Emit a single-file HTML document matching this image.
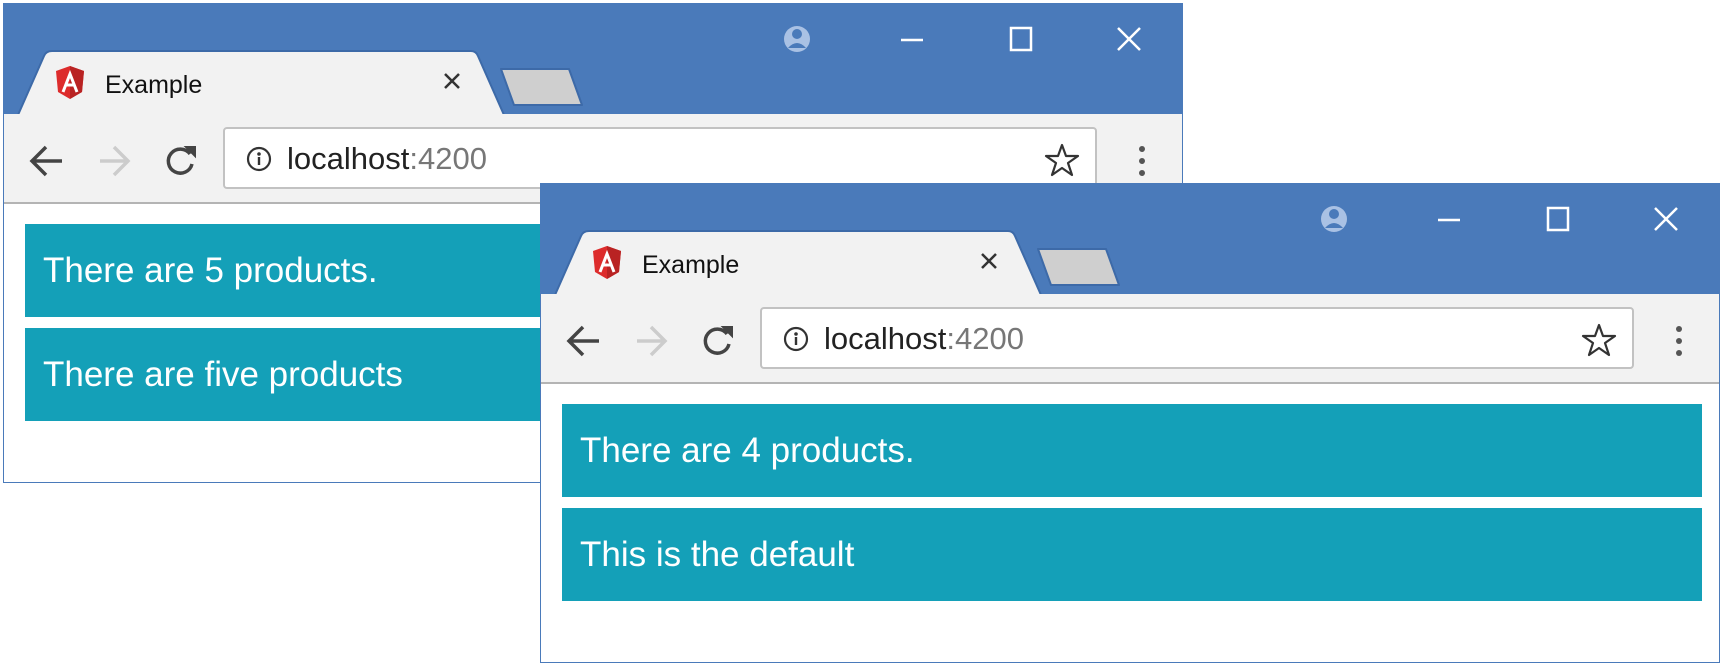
<!DOCTYPE html>
<html><head><meta charset="utf-8"><style>
body{margin:0;width:1725px;height:668px;background:#fff;position:relative;overflow:hidden;font-family:"Liberation Sans",sans-serif}
.win{position:absolute;width:1180px;height:480px;background:#fff;border:1px solid #4a7aba;box-sizing:border-box;overflow:hidden}
.tb{position:absolute;left:0;top:0;width:100%;height:111px;background:#4a7aba}
.tool{position:absolute;left:0;top:110px;width:100%;height:88px;background:#f2f2f2;border-bottom:2px solid #b4b4b4}
.addr{position:absolute;left:219px;top:13px;width:874px;height:62px;background:#fff;border:2px solid #c2c2c2;border-radius:4px;box-sizing:border-box}
.url{position:absolute;left:62px;top:12px;font-size:31px;color:#222}
.url span{color:#777}
.bar{position:absolute;left:21px;width:1140px;height:93px;background:#14a0b8;color:#fff;font-size:35px;line-height:93px;padding-left:18px;box-sizing:border-box}
.ex{position:absolute;left:101px;top:67px;font-size:25px;color:#111}
svg{position:absolute}
.top{z-index:2}
</style></head><body>

<div class="win" style="left:3px;top:3px">
 <div class="tb"></div>
 <svg style="left:0;top:0" width="1180" height="112">
  <path d="M14 111 L40 52 Q42 47 48 47 L467 47 Q472 47 474 52 L500 111 Z" fill="#f2f2f2" stroke="#3d6aa8" stroke-width="2"/>
  <path d="M497 65 L565 65 L578 101 L510 101 Z" fill="#cfcfcf" stroke="#3d6aa8" stroke-width="2" stroke-linejoin="round"/>
  <path d="M66 62 L80 67 L78 88 L66 95 L54 88 L52 67 Z" fill="#dd2c2c"/>
  <path d="M66 62 L80 67 L78 88 L66 95 Z" fill="#b92323"/>
  <path d="M59 88 L66 70 L73 88 M62 81 L70 81" stroke="#fff" stroke-width="3" fill="none"/>
  <path d="M441 70 L455 84 M455 70 L441 84" stroke="#333" stroke-width="2.5"/>
  <circle cx="793" cy="35" r="13" fill="#a9c1e4"/>
  <circle cx="793" cy="30" r="5" fill="#4a7aba"/>
  <path d="M784 44 Q793 34 802 44" fill="#4a7aba"/>
  <path d="M897 36 L919 36" stroke="#fff" stroke-width="2.5"/>
  <rect x="1007" y="24" width="20" height="22" fill="none" stroke="#fff" stroke-width="2.5"/>
  <path d="M1114 24 L1136 46 M1136 24 L1114 46" stroke="#fff" stroke-width="2.5"/>
 </svg>
 <div class="ex">Example</div>
 <div class="tool">
  <div class="addr">
   <svg style="left:21px;top:17px" width="26" height="26"><circle cx="13" cy="13" r="11" fill="none" stroke="#333" stroke-width="2.2"/><circle cx="13" cy="8" r="1.8" fill="#333"/><rect x="11.8" y="11" width="2.4" height="8" fill="#333"/></svg>
   <div class="url">localhost<span>:4200</span></div>
  </div>
  <svg class="top" style="left:0;top:0" width="1180" height="88">
   <path d="M30 47 L58 47 M42 33 L28 47 L42 61" stroke="#444" stroke-width="3.5" fill="none"/>
   <path d="M96 47 L124 47 M110 33 L124 47 L110 61" stroke="#ccc" stroke-width="3.5" fill="none"/>
   <path d="M186 40 A12 12 0 1 0 188 50" stroke="#444" stroke-width="3.5" fill="none"/>
   <path d="M182 33 L191 33 L191 42 Z" fill="#444" stroke="#444" stroke-width="2"/>
   <path d="M1058 31 L1062 42 L1074 42 L1064 49 L1068 61 L1058 54 L1048 61 L1052 49 L1042 42 L1054 42 Z" fill="none" stroke="#333" stroke-width="2.2" stroke-linejoin="round"/>
   <circle cx="1138" cy="35" r="3" fill="#555"/><circle cx="1138" cy="47" r="3" fill="#555"/><circle cx="1138" cy="59" r="3" fill="#555"/>
  </svg>
 </div>
 <div class="bar" style="top:220px">There are 5 products.</div>
 <div class="bar" style="top:324px">There are five products</div>
</div>

<div class="win" style="left:540px;top:183px">
 <div class="tb"></div>
 <svg style="left:0;top:0" width="1180" height="112">
  <path d="M14 111 L40 52 Q42 47 48 47 L467 47 Q472 47 474 52 L500 111 Z" fill="#f2f2f2" stroke="#3d6aa8" stroke-width="2"/>
  <path d="M497 65 L565 65 L578 101 L510 101 Z" fill="#cfcfcf" stroke="#3d6aa8" stroke-width="2" stroke-linejoin="round"/>
  <path d="M66 62 L80 67 L78 88 L66 95 L54 88 L52 67 Z" fill="#dd2c2c"/>
  <path d="M66 62 L80 67 L78 88 L66 95 Z" fill="#b92323"/>
  <path d="M59 88 L66 70 L73 88 M62 81 L70 81" stroke="#fff" stroke-width="3" fill="none"/>
  <path d="M441 70 L455 84 M455 70 L441 84" stroke="#333" stroke-width="2.5"/>
  <circle cx="793" cy="35" r="13" fill="#a9c1e4"/>
  <circle cx="793" cy="30" r="5" fill="#4a7aba"/>
  <path d="M784 44 Q793 34 802 44" fill="#4a7aba"/>
  <path d="M897 36 L919 36" stroke="#fff" stroke-width="2.5"/>
  <rect x="1007" y="24" width="20" height="22" fill="none" stroke="#fff" stroke-width="2.5"/>
  <path d="M1114 24 L1136 46 M1136 24 L1114 46" stroke="#fff" stroke-width="2.5"/>
 </svg>
 <div class="ex">Example</div>
 <div class="tool">
  <div class="addr">
   <svg style="left:21px;top:17px" width="26" height="26"><circle cx="13" cy="13" r="11" fill="none" stroke="#333" stroke-width="2.2"/><circle cx="13" cy="8" r="1.8" fill="#333"/><rect x="11.8" y="11" width="2.4" height="8" fill="#333"/></svg>
   <div class="url">localhost<span>:4200</span></div>
  </div>
  <svg class="top" style="left:0;top:0" width="1180" height="88">
   <path d="M30 47 L58 47 M42 33 L28 47 L42 61" stroke="#444" stroke-width="3.5" fill="none"/>
   <path d="M96 47 L124 47 M110 33 L124 47 L110 61" stroke="#ccc" stroke-width="3.5" fill="none"/>
   <path d="M186 40 A12 12 0 1 0 188 50" stroke="#444" stroke-width="3.5" fill="none"/>
   <path d="M182 33 L191 33 L191 42 Z" fill="#444" stroke="#444" stroke-width="2"/>
   <path d="M1058 31 L1062 42 L1074 42 L1064 49 L1068 61 L1058 54 L1048 61 L1052 49 L1042 42 L1054 42 Z" fill="none" stroke="#333" stroke-width="2.2" stroke-linejoin="round"/>
   <circle cx="1138" cy="35" r="3" fill="#555"/><circle cx="1138" cy="47" r="3" fill="#555"/><circle cx="1138" cy="59" r="3" fill="#555"/>
  </svg>
 </div>
 <div class="bar" style="top:220px">There are 4 products.</div>
 <div class="bar" style="top:324px">This is the default</div>
</div>
</body></html>
